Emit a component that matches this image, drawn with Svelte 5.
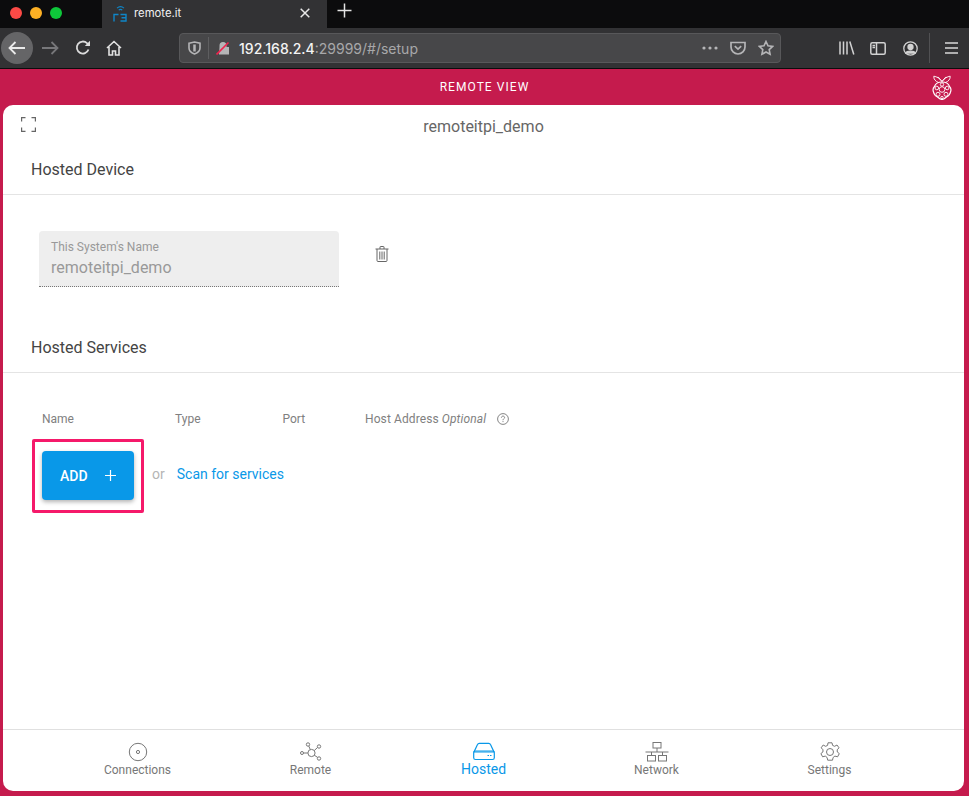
<script>
  const navItems = [
    { label: "Connections", icon: "connections" },
    { label: "Remote", icon: "remote" },
    { label: "Hosted", icon: "hosted", active: true },
    { label: "Network", icon: "network" },
    { label: "Settings", icon: "settings" },
  ];
</script>

<div class="page">
  <div class="tabstrip">
    <div class="lights">
      <span class="light red"></span>
      <span class="light amber"></span>
      <span class="light green"></span>
    </div>
    <div class="tab">
      <svg class="favicon" width="14" height="17" viewBox="0 0 14 17" fill="none" stroke="#0f86c8" stroke-width="1.4">
        <path d="M1 16.500V9.500H5.500" />
        <path d="M7.500 9.500H13V16H7.500M8.500 12.700H13" />
        <path d="M4 3.200C6 1.400 9 1.400 11 3.200M5.700 5.200C6.800 4.200 8.200 4.200 9.300 5.200" stroke-width="1.100" />
      </svg>
      <span class="tab-title">remote.it</span>
      <svg class="tab-close" width="10" height="10" viewBox="0 0 10 10" stroke="#e8e8e8" stroke-width="1.5">
        <path d="M.7.7l8.600 8.600M9.300.7L.7 9.300" />
      </svg>
    </div>
    <svg class="new-tab" width="15" height="15" viewBox="0 0 15 15" stroke="#e4e4e4" stroke-width="1.500">
      <path d="M7.500.5v14M.5 7.500h14" />
    </svg>
  </div>

  <div class="toolbar">
    <div class="back">
      <svg width="18" height="14" viewBox="0 0 18 14" fill="none" stroke="#eaeaea" stroke-width="1.800">
        <path d="M17 7H2M7.500 1L1.500 7l6 6" />
      </svg>
    </div>
    <svg class="tool forward" width="17" height="14" viewBox="0 0 17 14" fill="none" stroke="#77777a" stroke-width="1.800">
      <path d="M0 7h15M9.500 1l6 6-6 6" />
    </svg>
    <svg class="tool reload" width="16" height="16" viewBox="0 0 16 16" fill="none" stroke="#dcdcdc" stroke-width="1.800">
      <path d="M13.500 9.500A6 6 0 1 1 12 3.200L14.500 5.500" />
      <path d="M15 .8V6H9.800" fill="#dcdcdc" stroke="none" />
    </svg>
    <svg class="tool home" width="16" height="16" viewBox="0 0 16 16" fill="none" stroke="#e2e2e2" stroke-width="1.600">
      <path d="M1 8L8 1.500 15 8M3 7v8h3.500v-4h3v4H13V7" />
    </svg>
    <div class="urlbar">
      <svg class="shield" width="13" height="14" viewBox="0 0 13 14" fill="none" stroke="#b5b5b7" stroke-width="1.600">
        <path d="M1 2.200L6.500 1 12 2.200V7c0 3-2.500 5-5.500 6C3.500 12 1 10 1 7z" />
        <path d="M6.500 3.500V10.500" stroke-width="2.500" />
      </svg>
      <span class="url-sep"></span>
      <svg class="lock" width="14" height="14" viewBox="0 0 14 14">
        <path d="M3.500 6V4.500a3.500 3.500 0 0 1 7 0V6H13v7.500H3z" fill="#b5b5b7" />
        <path d="M.5 13.500L12.500 1.500" stroke="#f0224e" stroke-width="1.600" />
      </svg>
      <span class="host">192.168.2.4</span><span class="path">:29999/#/setup</span>
      <span class="url-spacer"></span>
      <svg class="dots" width="16" height="4" viewBox="0 0 16 4" fill="#b5b5b7">
        <circle cx="2" cy="2" r="1.600" /><circle cx="8" cy="2" r="1.600" /><circle cx="14" cy="2" r="1.600" />
      </svg>
      <svg class="pocket" width="16" height="14" viewBox="0 0 16 14" fill="none" stroke="#b5b5b7" stroke-width="1.700">
        <path d="M1 1.500h14V6a7 7 0 0 1-14 0z" />
        <path d="M4.800 5.200L8 8.200l3.200-3" />
      </svg>
      <svg class="star" width="16" height="16" viewBox="0 0 16 16" fill="none" stroke="#b5b5b7" stroke-width="1.600">
        <path d="M8 1.500l2 4.300 4.700.6-3.500 3.200.9 4.700L8 12l-4.100 2.300.9-4.700L1.300 6.400 6 5.800z" />
      </svg>
    </div>
    <svg class="tool library" width="16" height="14" viewBox="0 0 16 14" fill="none" stroke="#d2d2d2" stroke-width="1.500">
      <path d="M1 .5v13M4.500.5v13M8 .5v13M10.800.5l4 13" />
    </svg>
    <svg class="tool sidebar" width="16" height="13" viewBox="0 0 16 13" fill="none" stroke="#d2d2d2" stroke-width="1.500">
      <rect x=".8" y=".8" width="14.400" height="11.400" rx="1.500" />
      <path d="M6.500 1v11M2.500 3.500h2.500M2.500 5.500h2.500" />
    </svg>
    <svg class="tool account" width="15" height="15" viewBox="0 0 15 15" fill="none" stroke="#d2d2d2" stroke-width="1.300">
      <circle cx="7.500" cy="7.500" r="6.700" />
      <circle cx="7.500" cy="6" r="2.500" fill="#d2d2d2" />
      <path d="M2.800 12c1-2.500 8.400-2.500 9.400 0z" fill="#d2d2d2" />
    </svg>
    <span class="tool-sep"></span>
    <svg class="tool menu" width="13" height="12" viewBox="0 0 13 12" stroke="#d8d8d8" stroke-width="1.500">
      <path d="M0 1h13M0 6h13M0 11h13" />
    </svg>
  </div>

  <div class="app">
    <div class="banner">
      <span class="banner-title">REMOTE VIEW</span>
      <svg class="raspberry" width="20" height="25" viewBox="0 0 20 25" fill="none" stroke="#fff" stroke-width=".9">
        <path d="M10 6.500C8 3.500 4.500 1.500 1.800 1.200 1.500 4 3.500 6.500 6.500 7.500M10 6.500c2-3 5.500-5 8.200-5.300.3 2.800-1.700 5.300-4.700 6.300M6 1.800L10 6.500 14 1.800" />
        <path d="M10 7c-3 0-6.500 1.500-7.500 4.500C1 13 .7 15 1.500 17c.5 2.500 2 4 4 5 1.500 1.300 3 2.500 4.500 2.500s3-1.200 4.500-2.500c2-1 3.500-2.500 4-5 .8-2 .5-4-1-5.500C16.500 8.500 13 7 10 7z" stroke-width="1.200" />
        <circle cx="10" cy="14.500" r="2.800" />
        <circle cx="4.800" cy="13" r="1.800" />
        <circle cx="15.200" cy="13" r="1.800" />
        <circle cx="6" cy="19.300" r="2" />
        <circle cx="14" cy="19.300" r="2" />
        <circle cx="10" cy="9.500" r="1.700" />
        <circle cx="10" cy="22.500" r="1.200" />
      </svg>
    </div>

    <main class="card">
      <div class="card-top">
        <svg class="expand" width="15" height="15" viewBox="0 0 15 15" fill="none" stroke="#666" stroke-width="1.200">
          <path d="M.6 4.500V.6H4.500M10.500 .6h3.900V4.500M14.400 10.500v3.900H10.500M4.500 14.400H.6V10.500" />
        </svg>
        <h1>remoteitpi_demo</h1>
      </div>

      <h2 class="section-title first">Hosted Device</h2>
      <div class="device-row">
        <div class="name-field">
          <span class="field-label">This System's Name</span>
          <span class="field-value">remoteitpi_demo</span>
        </div>
        <svg class="trash" width="14" height="16" viewBox="0 0 14 16" fill="none" stroke="#666" stroke-width="1">
          <path d="M.5 3h13M2 3v11.500a1 1 0 0 0 1 1h8a1 1 0 0 0 1-1V3M5 3V1a.500.500 0 0 1 .5-.5h3A.500.500 0 0 1 9 1v2M4.800 5.500v8M7 5.500v8M9.200 5.500v8" />
        </svg>
      </div>

      <h2 class="section-title second">Hosted Services</h2>
      <div class="service-head">
        <span class="col-name">Name</span>
        <span class="col-type">Type</span>
        <span class="col-port">Port</span>
        <span class="col-host">Host Address <em>Optional</em></span>
        <svg class="help" width="12" height="12" viewBox="0 0 12 12" fill="none" stroke="#777" stroke-width=".9">
          <circle cx="6" cy="6" r="5.400" />
          <path d="M4.400 4.700C4.500 3.600 5.200 3.100 6 3.100c.9 0 1.600.6 1.600 1.400C7.600 5.700 6 5.700 6 7.200M6 8.100v1" />
        </svg>
      </div>

      <div class="add-row">
        <div class="highlight">
          <button class="add">
            <span>ADD</span>
            <svg width="11" height="11" viewBox="0 0 11 11" stroke="#fff" stroke-width="1.200">
              <path d="M5.500 0v11M0 5.500h11" />
            </svg>
          </button>
        </div>
        <span class="or">or</span>
        <span class="scan">Scan for services</span>
      </div>

      <nav class="bottom-nav">
        {#each navItems as item}
          <div class="nav-item" class:active={item.active}>
            <svg width="24" height="22" viewBox="0 0 24 22" fill="none" stroke="currentColor" stroke-width="1">
              {#if item.icon == "connections"}
                <circle cx="12" cy="11" r="8.700" />
                <circle cx="12" cy="11" r="1.600" />
              {:else if item.icon == "remote"}
                <circle cx="12.500" cy="12" r="3.600" />
                <circle cx="9" cy="3.500" r="1.700" />
                <circle cx="20" cy="5.500" r="1.700" />
                <circle cx="3" cy="12" r="1.500" />
                <circle cx="20" cy="17.500" r="1.700" />
                <path d="M9.800 5.100l1.500 3.500M18.500 6.500l-3.200 3M4.500 12h4.400M18.600 16.400l-3.300-2.200" />
              {:else if item.icon == "hosted"}
                <path d="M5.500 3.500A2 2 0 0 1 7.300 2.300h9.400a2 2 0 0 1 1.800 1.200L22 11H2z" stroke-width="1.200" />
                <rect x="1.700" y="10" width="20.600" height="8.500" rx="1.800" stroke-width="1.200" />
                <path d="M15.500 14.500h1.500M18 14.500h1.500" stroke-width="1.200" />
              {:else if item.icon == "network"}
                <rect x="8" y="1.500" width="8" height="5.500" />
                <path d="M12 7v4M.5 11h23M6.500 11v3.500M17.500 11v3.500" />
                <rect x="2.500" y="14.500" width="8" height="5.500" />
                <rect x="13.500" y="14.500" width="8" height="5.500" />
              {:else}
                <circle cx="12" cy="11" r="3.500" />
                <path d="M10 1.800h4l.6 2.600 2 .9 2.400-1.300 2 2.800-1.800 2 .1 2.200 2 1.600-1.700 3.200-2.700-.7-1.800 1.400-.6 2.700H9.700l-.6-2.700-1.800-1.400-2.700.7-1.700-3.200 2-1.600.1-2.200-1.800-2 2-2.800 2.400 1.300 2-.9z" stroke-linejoin="round" />
              {/if}
            </svg>
            <span>{item.label}</span>
          </div>
        {/each}
      </nav>
    </main>
  </div>
</div>

<style>
  :global(body) {
    margin: 0;
    background: #c51b4d;
  }

  .page {
    width: 969px;
    height: 796px;
    overflow: hidden;
    display: flex;
    flex-direction: column;
    font-family: Roboto, "Liberation Sans", sans-serif;
  }

  /* browser chrome */
  .tabstrip {
    height: 28px;
    background: #0c0c0d;
    display: flex;
    align-items: stretch;
    flex: none;
  }

  .lights {
    width: 102px;
    display: flex;
    align-items: center;
    gap: 8px;
    padding: 0 0 3px 10px;
    box-sizing: border-box;
  }

  .light {
    width: 12px;
    height: 12px;
    border-radius: 50%;
  }

  .red { background: #fc4a46; }
  .amber { background: #fdb024; }
  .green { background: #0ec73a; }

  .tab {
    width: 225px;
    background: #323234;
    display: flex;
    align-items: center;
    box-sizing: border-box;
    padding: 0 17px 2px 11px;
  }

  .tab-title {
    margin-left: 7px;
    font-family: Inter, Roboto, sans-serif;
    font-size: 11.300px;
    color: #f0f0f0;
    flex: 1;
  }

  .new-tab {
    margin: 3px 0 0 10px;
    align-self: flex-start;
  }

  .toolbar {
    height: 41px;
    box-sizing: border-box;
    border-bottom: 1px solid #0c0c0d;
    background: #323234;
    display: flex;
    align-items: center;
    flex: none;
    padding-left: 1px;
  }

  .back {
    width: 32px;
    height: 32px;
    border-radius: 50%;
    background: #656567;
    display: flex;
    align-items: center;
    justify-content: center;
  }

  .forward { margin-left: 9px; }
  .reload { margin-left: 16px; margin-top: -1px; }
  .home { margin-left: 15px; }

  .urlbar {
    width: 602px;
    height: 30px;
    box-sizing: border-box;
    margin-left: 57px;
    background: #474749;
    border: 1px solid #58585a;
    border-radius: 4px;
    display: flex;
    align-items: center;
    font-family: Inter, Roboto, sans-serif;
    font-size: 14px;
  }

  .shield { margin-left: 8px; }

  .url-sep {
    width: 1px;
    height: 22px;
    background: #5e5e60;
    margin: 0 8px 0 7px;
  }

  .lock { margin-left: -1px; }

  .host {
    margin-left: 9px;
    color: #f4f4f4;
    font-weight: 500;
  }

  .path { color: #a8a8aa; }

  .url-spacer { flex: 1; }

  .dots { margin-right: 12px; }
  .pocket { margin-right: 12px; }
  .star { margin-right: 6px; }

  .library { margin-left: 58px; }
  .sidebar { margin-left: 15px; }
  .account { margin-left: 17px; }

  .tool-sep {
    width: 1px;
    height: 30px;
    background: #515153;
    margin: 0 15px 0 11px;
  }

  /* remote.it page */
  .app {
    flex: 1;
    display: flex;
    flex-direction: column;
    background: #c51b4d;
    min-height: 0;
  }

  .banner {
    height: 36px;
    flex: none;
    position: relative;
    display: flex;
    align-items: center;
    justify-content: center;
  }

  .banner-title {
    color: #fff;
    font-size: 12px;
    font-weight: 400;
    letter-spacing: 1.050px;
  }

  .raspberry {
    position: absolute;
    right: 17px;
    top: 6px;
  }

  .card {
    height: 686px;
    margin: 0 5px 0 3px;
    background: #fff;
    border-radius: 10px;
    display: flex;
    flex-direction: column;
    position: relative;
  }

  .card-top {
    height: 42px;
    position: relative;
    display: flex;
    align-items: center;
    justify-content: center;
  }

  .expand {
    position: absolute;
    left: 18px;
    top: 12px;
  }

  h1 {
    margin: 0;
    font-size: 16px;
    font-weight: 400;
    color: #666;
  }

  .section-title {
    margin: 0;
    padding: 0 0 0 28px;
    font-size: 16px;
    font-weight: 400;
    color: #444;
    line-height: 24px;
    border-bottom: 1px solid #e4e4e4;
  }

  .section-title.first {
    padding-top: 11px;
    padding-bottom: 12px;
  }

  .section-title.second {
    margin-top: 49px;
    padding-bottom: 12px;
  }

  .device-row {
    display: flex;
    align-items: center;
    padding: 36px 0 0 36px;
  }

  .name-field {
    width: 300px;
    height: 56px;
    box-sizing: border-box;
    padding: 9px 12px 0;
    background: #eee;
    border-radius: 4px 4px 0 0;
    border-bottom: 1px dotted #777;
    display: flex;
    flex-direction: column;
  }

  .field-label {
    font-size: 12px;
    line-height: 14px;
    color: #999;
  }

  .field-value {
    margin-top: 5px;
    font-size: 16px;
    line-height: 18px;
    color: #999;
  }

  .trash {
    margin: 0 0 10px 36px;
  }

  .service-head {
    height: 16px;
    margin-top: 38px;
    padding-left: 39px;
    display: flex;
    align-items: center;
    font-size: 12px;
    color: #808080;
  }

  .col-name { width: 133px; }
  .col-type { width: 107.500px; }
  .col-port { width: 82.500px; }
  .col-host { letter-spacing: 0.1px; }
  .col-host em { font-style: italic; }

  .help { margin-left: 11px; }

  .add-row {
    display: flex;
    align-items: center;
    margin: 12px 0 0 29px;
  }

  .highlight {
    box-sizing: border-box;
    width: 112px;
    height: 74px;
    border: 3px solid #f5196a;
    border-radius: 2px;
    padding: 9px 0 0 7px;
  }

  .add {
    width: 92px;
    height: 49px;
    border: 0;
    border-radius: 4px;
    background: #0998e8;
    color: #fff;
    font-family: inherit;
    font-size: 14px;
    font-weight: 500;
    padding: 0 18px;
    display: flex;
    align-items: center;
    justify-content: space-between;
    box-shadow: 0 2px 4px rgba(0, 0, 0, 0.3);
  }

  .or {
    margin: 0 0 4px 8px;
    font-size: 14px;
    color: #b5b5b5;
  }

  .scan {
    margin: 0 0 4px 12px;
    font-size: 14px;
    color: #0998e8;
  }

  .bottom-nav {
    margin-top: auto;
    box-sizing: border-box;
    height: 62px;
    border-top: 1px solid #e0e0e0;
    padding: 0 48px;
    display: grid;
    grid-template-columns: repeat(5, 1fr);
  }

  .nav-item {
    display: flex;
    flex-direction: column;
    align-items: center;
    padding-top: 11px;
    color: #777;
    font-size: 12px;
    line-height: 16px;
  }

  .nav-item svg {
    margin-bottom: -1px;
  }

  .nav-item.active {
    color: #0998e8;
    font-size: 14px;
  }

  .nav-item.active span {
    margin-top: -1px;
  }
</style>
